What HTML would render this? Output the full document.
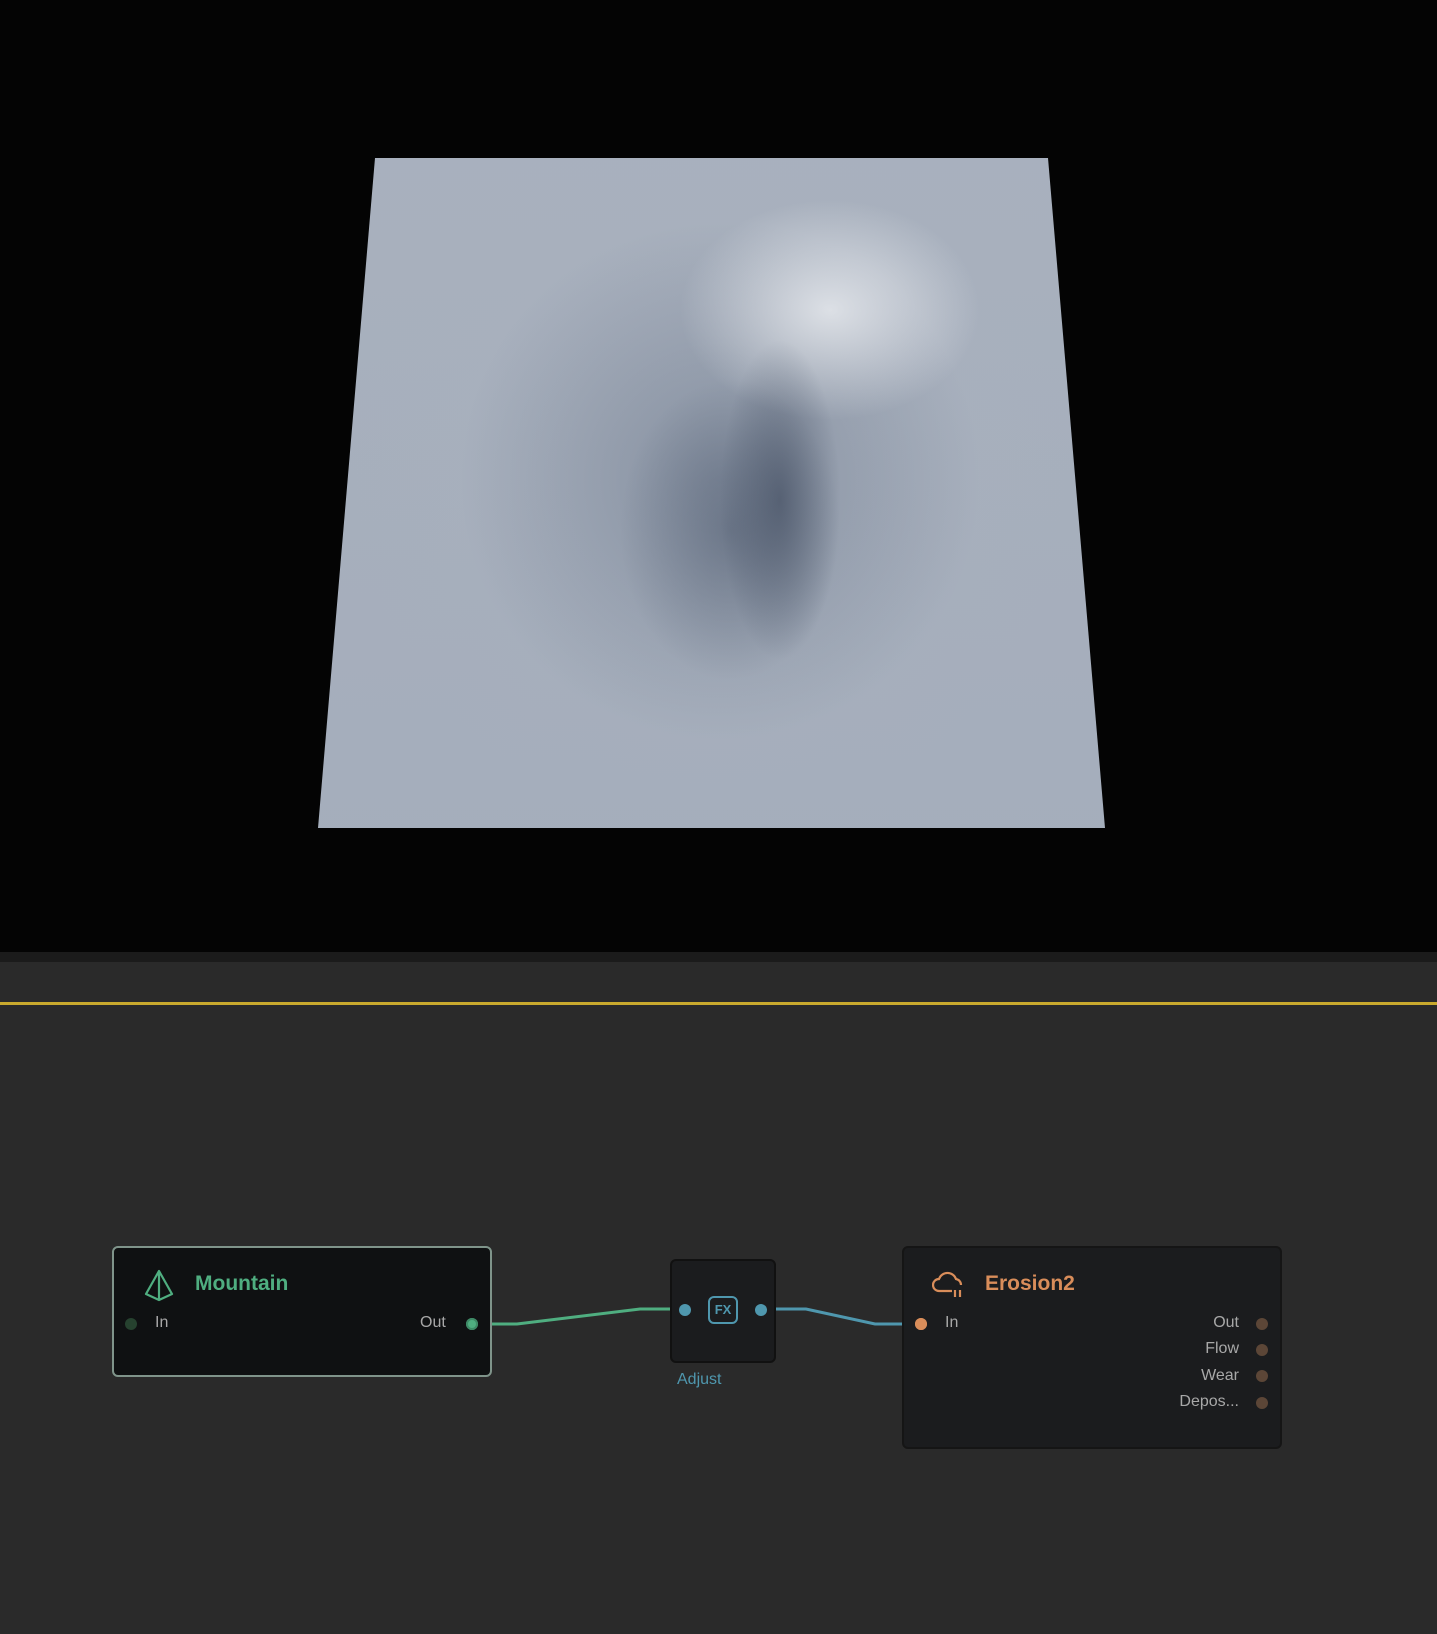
<!DOCTYPE html>
<html><head><style>
body{margin:0;width:1437px;height:1634px;background:#2a2a2a;position:relative;overflow:hidden;font-family:"Liberation Sans",sans-serif}
#view{position:absolute;left:0;top:0;width:1437px;height:952px;background:#040404}
#terrain{position:absolute;left:0;top:0;width:1437px;height:952px;clip-path:polygon(375px 158px,1048px 158px,1105px 828px,318px 828px);
background:
radial-gradient(ellipse 60px 160px at 780px 500px,rgba(55,66,86,.55),rgba(55,66,86,0) 100%),
radial-gradient(ellipse 110px 150px at 730px 530px,rgba(70,82,102,.45),rgba(70,82,102,0) 100%),
radial-gradient(ellipse 150px 110px at 830px 310px,rgba(240,242,245,.75),rgba(240,242,245,0) 100%),
radial-gradient(ellipse 260px 260px at 720px 480px,rgba(100,112,132,.5),rgba(100,112,132,0) 100%),
radial-gradient(ellipse 360px 360px at 710px 470px,rgba(170,178,190,.4),rgba(170,178,190,0) 100%),
linear-gradient(#a9b1be,#a4adbb);}
#strip{position:absolute;left:0;top:952px;width:1437px;height:10px;background:#1b1b1b}
#yl{position:absolute;left:0;top:1002px;width:1437px;height:3px;background:#c9a92e}
.node{position:absolute;box-sizing:border-box;border-radius:6px}
.t{position:absolute;font-size:21px;font-weight:bold}
.l{position:absolute;font-size:16px;color:#a8a8a8}
.d{position:absolute;width:12px;height:12px;border-radius:50%}
</style></head><body>
<div id="view"><div id="terrain"></div></div>
<div id="strip"></div><div id="yl"></div>
<svg style="position:absolute;left:0;top:0" width="1437" height="1634">
<polyline points="491,1324 517,1324 640,1309 670,1309" fill="none" stroke="#4fae80" stroke-width="3"/>
<polyline points="775,1309 806,1309 875,1324 902,1324" fill="none" stroke="#4f97ae" stroke-width="3"/>
</svg>
<div class="node" style="left:112px;top:1246px;width:380px;height:131px;background:#0f1112;border:2px solid #7f948a"></div>
<svg style="position:absolute;left:142px;top:1268px" width="34" height="34" viewBox="0 0 34 34"><path d="M17 3 L4 26 L17 32 L30 26 Z M17 3 L17 32" fill="none" stroke="#4fae80" stroke-width="2.2" stroke-linejoin="round"/></svg>
<div class="t" style="left:195px;top:1272px;color:#4fae80">Mountain</div>
<div class="d" style="left:125px;top:1318px;background:#26422f"></div>
<div class="l" style="left:155px;top:1314px">In</div>
<div class="l" style="left:420px;top:1314px">Out</div>
<div class="d" style="left:466px;top:1318px;background:#4fae80;box-shadow:inset 0 0 0 2px #3e8a66"></div>
<div class="node" style="left:670px;top:1259px;width:106px;height:104px;background:#1b1c1e;border:2px solid #111"></div>
<div class="d" style="left:679px;top:1304px;background:#4f97ae"></div>
<div class="d" style="left:755px;top:1304px;background:#4f97ae"></div>
<div style="position:absolute;left:708px;top:1296px;width:26px;height:24px;border:2.5px solid #4f97ae;border-radius:6px;color:#4f97ae;font-size:13px;font-weight:bold;text-align:center;line-height:24px">FX</div>
<div class="l" style="left:677px;top:1371px;color:#4f97ae">Adjust</div>
<div class="node" style="left:902px;top:1246px;width:380px;height:203px;background:#1b1c1e;border:2px solid #151515"></div>
<svg style="position:absolute;left:932px;top:1270px" width="34" height="32" viewBox="0 0 34 32"><path d="M20 21 H7 a6 6 0 0 1 0-12 a9 9 0 0 1 17 0 a6 6 0 0 1 5 6" fill="none" stroke="#d98d5a" stroke-width="2.2"/><path d="M23 20v7M28 20v7" stroke="#d98d5a" stroke-width="2.2"/></svg>
<div class="t" style="left:985px;top:1272px;color:#d98d5a">Erosion2</div>
<div class="d" style="left:915px;top:1318px;background:#d98d5a;box-shadow:inset 0 0 0 3px #d98d5a"></div>
<div class="l" style="left:945px;top:1314px">In</div>
<div class="l" style="right:198px;top:1314px">Out</div>
<div class="l" style="right:198px;top:1340px">Flow</div>
<div class="l" style="right:198px;top:1367px">Wear</div>
<div class="l" style="right:198px;top:1393px">Depos...</div>
<div class="d" style="left:1256px;top:1318px;background:#5c4637"></div>
<div class="d" style="left:1256px;top:1344px;background:#5c4637"></div>
<div class="d" style="left:1256px;top:1370px;background:#5c4637"></div>
<div class="d" style="left:1256px;top:1397px;background:#5c4637"></div>
</body></html>
